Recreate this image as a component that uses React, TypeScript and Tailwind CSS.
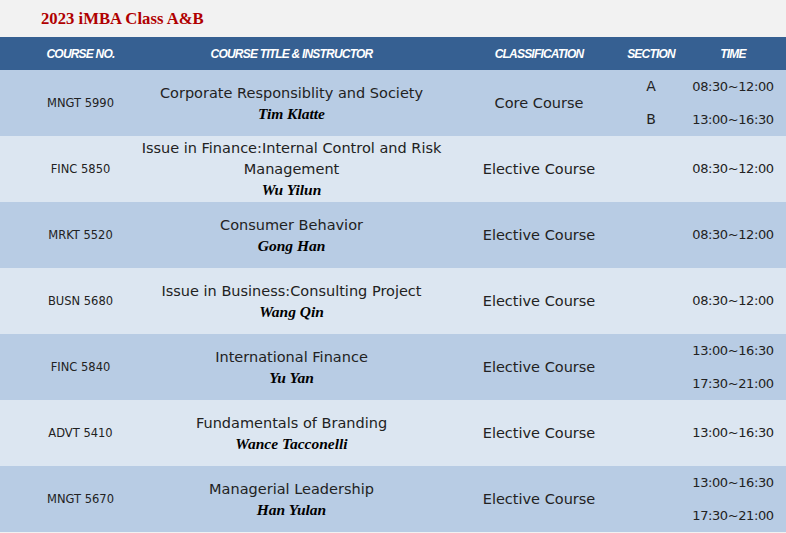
import React from 'react'

type Course = {
  code: string
  title: string[]
  instructor: string
  kind: string
  sections?: string[]
  times: string[]
  tone: 'dark' | 'light'
}

const courses: Course[] = [
  {
    code: 'MNGT 5990',
    title: ['Corporate Responsiblity and Society'],
    instructor: 'Tim Klatte',
    kind: 'Core Course',
    sections: ['A', 'B'],
    times: ['08:30~12:00', '13:00~16:30'],
    tone: 'dark',
  },
  {
    code: 'FINC 5850',
    title: ['Issue in Finance:Internal Control and Risk', 'Management'],
    instructor: 'Wu Yilun',
    kind: 'Elective Course',
    times: ['08:30~12:00'],
    tone: 'light',
  },
  {
    code: 'MRKT 5520',
    title: ['Consumer Behavior'],
    instructor: 'Gong Han',
    kind: 'Elective Course',
    times: ['08:30~12:00'],
    tone: 'dark',
  },
  {
    code: 'BUSN 5680',
    title: ['Issue in Business:Consulting Project'],
    instructor: 'Wang Qin',
    kind: 'Elective Course',
    times: ['08:30~12:00'],
    tone: 'light',
  },
  {
    code: 'FINC 5840',
    title: ['International Finance'],
    instructor: 'Yu Yan',
    kind: 'Elective Course',
    times: ['13:00~16:30', '17:30~21:00'],
    tone: 'dark',
  },
  {
    code: 'ADVT 5410',
    title: ['Fundamentals of Branding'],
    instructor: 'Wance Tacconelli',
    kind: 'Elective Course',
    times: ['13:00~16:30'],
    tone: 'light',
  },
  {
    code: 'MNGT 5670',
    title: ['Managerial Leadership'],
    instructor: 'Han Yulan',
    kind: 'Elective Course',
    times: ['13:00~16:30', '17:30~21:00'],
    tone: 'dark',
  },
]

const cols = 'grid grid-cols-[161px_261px_196px_66px_1fr]'
const sans = "font-['DejaVu_Sans','Liberation_Sans',sans-serif]"

const CourseRow: React.FC<{ course: Course }> = ({ course }) => (
  <div
    className={`${cols} h-[66px] items-center text-[#222] ${sans} ${
      course.tone === 'dark' ? 'bg-[#b8cce4]' : 'bg-[#dce6f1]'
    }`}
  >
    <div className="pt-[2px] text-center text-[11.5px]">{course.code}</div>
    <div className="flex flex-col items-center text-center leading-[21px]">
      {course.title.map((line) => (
        <span key={line} className="whitespace-nowrap text-[14.5px]">
          {line}
        </span>
      ))}
      <span className="font-['Liberation_Serif',serif] text-[15.5px] font-bold italic leading-[20px] text-black">
        {course.instructor}
      </span>
    </div>
    <div className="pl-[38px] pt-[2px] text-center text-[14.5px]">{course.kind}</div>
    {/* section and time split the row into 33px halves when there are two */}
    <div className="flex h-full flex-col justify-center text-center text-[14px]">
      {course.sections?.map((s) => (
        <span key={s} className="flex h-[33px] items-center justify-center">
          {s}
        </span>
      ))}
    </div>
    <div className="flex h-full flex-col justify-center pr-[4px] text-center text-[13px] tracking-[-0.4px]">
      {course.times.map((t) => (
        <span key={t} className="flex h-[33px] items-center justify-center">
          {t}
        </span>
      ))}
    </div>
  </div>
)

export default function App() {
  return (
    <div className="min-h-[533px] w-[786px] bg-[#f2f2f2]">
      <div className="flex h-[37px] items-center pl-[41px] font-['Liberation_Serif',serif] text-[16.7px] font-bold text-[#b00000]">
        2023 iMBA Class A&amp;B
      </div>
      <div
        className={`${cols} h-[33px] items-center bg-[#366092] font-['Liberation_Sans',sans-serif] text-[12px] font-bold italic tracking-[-0.8px] text-white`}
      >
        <div className="text-center">COURSE NO.</div>
        <div className="text-center">COURSE TITLE &amp; INSTRUCTOR</div>
        <div className="pl-[38px] text-center">CLASSIFICATION</div>
        <div className="text-center">SECTION</div>
        <div className="pr-[4px] text-center">TIME</div>
      </div>
      {courses.map((c) => (
        <CourseRow key={c.code + c.instructor} course={c} />
      ))}
    </div>
  )
}
